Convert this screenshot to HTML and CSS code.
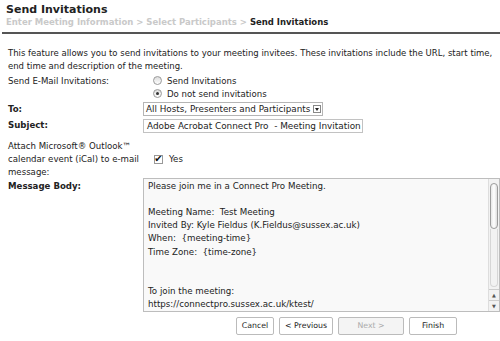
FILE: index.html
```html
<!DOCTYPE html>
<html lang="en">
<head>
    <meta charset="UTF-8">
    <title>Send Invitations</title>
    <link rel="stylesheet" href="styles.css">
</head>
<body>
    <div class="header">
        <h1 class="title">Send Invitations</h1>
        <div class="crumbs">Enter Meeting Information &gt; Select Participants &gt; <span class="current">Send Invitations</span></div>
    </div>
    <div class="rule"></div>

    <p class="intro">This feature allows you to send invitations to your meeting invitees. These invitations include the URL, start time, end time and description of the meeting.</p>

    <div class="form">
        <div class="label label-radios">Send E-Mail Invitations:</div>
        <div class="field radios">
            <div class="option"><span class="radio"></span>Send Invitations</div>
            <div class="option"><span class="radio checked"></span>Do not send invitations</div>
        </div>

        <div class="label strong label-to">To:</div>
        <div class="field row-to">
            <div class="select">All Hosts, Presenters and Participants<span class="arrow"></span></div>
        </div>

        <div class="label strong row-subject">Subject:</div>
        <div class="field row-subject">
            <div class="input">Adobe Acrobat Connect Pro  - Meeting Invitation for Test Meeting</div>
        </div>

        <div class="label label-attach">Attach Microsoft® Outlook™<br>calendar event (iCal) to e-mail<br>message:</div>
        <div class="field attach">
            <div class="option"><span class="checkbox">✔</span>Yes</div>
        </div>

        <div class="label strong label-body">Message Body:</div>
        <div class="field row-body">
            <div class="message">
                <div class="message-text">Please join me in a Connect Pro Meeting.

Meeting Name:  Test Meeting
Invited By: Kyle Fieldus (K.Fieldus@sussex.ac.uk)
When:  {meeting-time}
Time Zone:  {time-zone}


To join the meeting:
https://connectpro.sussex.ac.uk/ktest/</div>
                <div class="scrollbar">
                    <div class="thumb"></div>
                    <div class="track"></div>
                    <div class="step">▲</div>
                    <div class="step">▼</div>
                </div>
            </div>
        </div>
    </div>

    <div class="buttons">
        <button class="btn btn-cancel">Cancel</button>
        <button class="btn btn-prev">&lt; Previous</button>
        <button class="btn btn-next" disabled>Next &gt;</button>
        <button class="btn btn-finish">Finish</button>
    </div>
</body>
</html>
```

FILE: styles.css
```css
body {
    margin: 0;
    background-color: #fff;
    color: #222;
    font-family: "DejaVu Sans", Verdana, sans-serif;
    font-size: 8.6px;
    width: 500px;
    height: 341px;
    overflow: hidden;
}

.header {
    padding: 3px 0 0 6px;
}

.title {
    margin: 0;
    font-size: 11px;
    line-height: 14px;
    font-weight: bold;
    color: #222;
}

.crumbs {
    font-size: 8.5px;
    line-height: 10px;
    font-weight: bold;
    color: #c9c9c9;
}

.crumbs .current {
    color: #222;
}

.rule {
    height: 2px;
    margin: 5px 0 0 2px;
    background-color: #555;
}

.intro {
    margin: 13px 0 0 8px;
    font-size: 8.5px;
    line-height: 13px;
}

.form {
    display: grid;
    grid-template-columns: 135px 1fr;
    padding-left: 8px;
    margin-top: 1px;
}

.label {
    line-height: 12px;
}

.strong {
    font-weight: bold;
}

.label-radios {
    padding-top: 0.5px;
}

.option {
    display: flex;
    align-items: center;
    height: 13px;
    padding-left: 10px;
}

.radio {
    position: relative;
    width: 7px;
    height: 7px;
    margin-right: 5px;
    border: 1px solid #9a9a9a;
    border-radius: 50%;
    background: linear-gradient(#dcdcdc, #fff);
}

.radio.checked::after {
    content: "";
    position: absolute;
    left: 2px;
    top: 2px;
    width: 3px;
    height: 3px;
    border-radius: 50%;
    background-color: #333;
}

.row-to {
    margin-top: 2px;
}

.label-to {
    padding-top: 2.5px;
}

.select {
    position: relative;
    width: 176px;
    height: 12px;
    line-height: 12px;
    font-size: 8.8px;
    border: 1px solid #b5b5b5;
    padding-left: 2px;
}

.select .arrow {
    position: absolute;
    right: 1px;
    top: 2px;
    width: 6px;
    height: 6px;
    border: 1px solid #888;
    background-color: #fff;
}

.select .arrow::after {
    content: "";
    position: absolute;
    left: 1px;
    top: 2px;
    border-left: 2px solid transparent;
    border-right: 2px solid transparent;
    border-top: 3px solid #222;
}

.row-subject {
    margin-top: 3px;
}

.input {
    width: 215px;
    height: 12px;
    line-height: 12px;
    font-size: 8.9px;
    border: 1px solid #c2c2c2;
    padding-left: 3px;
    white-space: pre;
    overflow: hidden;
}

.label-attach {
    margin-top: 6.5px;
    line-height: 13px;
}

.attach {
    margin-top: 6.5px;
    padding-top: 13px;
}

.attach .option {
    padding-left: 11px;
}

.checkbox {
    display: flex;
    justify-content: center;
    width: 7px;
    height: 7px;
    margin-right: 6px;
    border: 1px solid #999;
    background-color: #fff;
    font-size: 10px;
    line-height: 6px;
    color: #111;
}

.label-body {
    margin-top: 1.5px;
}

.row-body {
    margin-top: -1px;
}

.message {
    display: flex;
    height: 132px;
    border: 1px solid #bdbdbd;
    background-color: #f9f9f9;
}

.message-text {
    flex: 1;
    padding: 1px 0 0 4px;
    font-size: 8.7px;
    line-height: 13.2px;
    white-space: pre;
    overflow: hidden;
}

.scrollbar {
    display: flex;
    flex-direction: column;
    width: 10px;
    border-left: 1px solid #ddd;
    background-color: #f2f2f2;
}

.thumb {
    height: 44px;
    margin: 4px 1px 0 1px;
    border: 1px solid #9c9c9c;
    border-radius: 5px;
    background: linear-gradient(to right, #e6e6e6, #fff 50%, #dedede);
}

.track {
    flex: 1;
    margin: 0 1px 2px 1px;
    border: 1px solid #d6d6d6;
    border-top: none;
    border-radius: 0 0 5px 5px;
}

.step {
    height: 10px;
    font-size: 5px;
    line-height: 10px;
    text-align: center;
    color: #555;
    border-top: 1px solid #ccc;
}

.buttons {
    display: flex;
    gap: 5px;
    margin: 5px 0 0 236px;
}

.btn {
    height: 18px;
    padding: 0;
    font-family: "DejaVu Sans", Verdana, sans-serif;
    font-size: 7.8px;
    color: #222;
    background-color: #fff;
    border: 1px solid #bbb;
    border-radius: 2px;
}

.btn-cancel {
    width: 38px;
}

.btn-prev {
    width: 54px;
}

.btn-next {
    width: 66px;
    color: #aaa;
    background-color: #f4f4f4;
}

.btn-finish {
    width: 48px;
}
```
